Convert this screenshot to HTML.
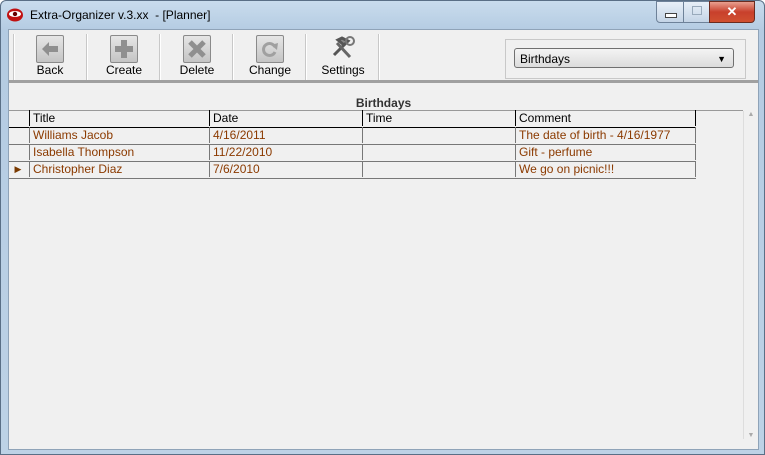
<html><head><style>
body{margin:0;width:765px;height:455px;overflow:hidden;font-family:"Liberation Sans",sans-serif;font-size:12px;background:#fff}
.win{position:absolute;left:0;top:0;width:763px;height:453px;border:1px solid #5a6f86;border-radius:6px 6px 0 0;background:linear-gradient(#c9dced,#b4cbe2 30px,#bdd2e6);}
.client{position:absolute;left:7px;top:28px;width:749px;height:419px;background:#f0f0f0;border:1px solid #8fa3b8}
.t{position:absolute;white-space:nowrap}
.btn{position:absolute;top:5px;width:26px;height:26px;border:1px solid #8a8a8a;background:linear-gradient(#e6e6e6,#c4c4c4);border-radius:2px}
.sep{position:absolute;top:4px;width:1px;height:46px;background:#c8c8c8;border-right:1px solid #fff}
.lbl{position:absolute;top:33px;font-size:12px;transform:translateX(-50%)}
.cell{position:absolute;border-right:1px solid #777;height:16px;line-height:16px;padding-left:3px;box-sizing:border-box}
.row{position:absolute;left:0;width:687px;height:17px;border-bottom:1px solid #777;color:#8b3a00}
</style></head><body>
<div class="win">
<svg style="position:absolute;left:6px;top:7px" width="16" height="14"><ellipse cx="8" cy="7" rx="8" ry="6.5" fill="#c01010"/><ellipse cx="8" cy="6" rx="6" ry="3" fill="#fff"/><circle cx="8" cy="6" r="2.2" fill="#600"/></svg>
<div class="t" style="left:29px;top:7px;font-size:12px">Extra-Organizer v.3.xx&nbsp; - [Planner]</div>
<div style="position:absolute;left:655px;top:0;width:26px;height:20px;border:1px solid #6e8299;border-radius:0 0 0 4px;background:linear-gradient(#e8f0f8,#c4d4e6)"><div style="position:absolute;left:8px;top:11px;width:10px;height:3px;background:#fff;border:1px solid #444"></div></div>
<div style="position:absolute;left:682px;top:0;width:25px;height:20px;border:1px solid #6e8299;background:linear-gradient(#e8f0f8,#c4d4e6)"><div style="position:absolute;left:8px;top:4px;width:8px;height:7px;border:1px solid #9ab"></div></div>
<div style="position:absolute;left:708px;top:0;width:44px;height:20px;border:1px solid #6b2c20;border-radius:0 0 4px 0;background:linear-gradient(#e8a090,#c8402c 50%,#d05030);color:#fff;font-weight:bold;text-align:center;font-size:13px;line-height:19px">✕</div>
<div class="client">
<div style="position:absolute;left:0;top:0;width:749px;height:50px;border-bottom:3px solid #a0a0a0">
<div class="sep" style="left:4px"></div><div class="sep" style="left:77px"></div><div class="sep" style="left:150px"></div><div class="sep" style="left:223px"></div><div class="sep" style="left:296px"></div><div class="sep" style="left:369px"></div>
<div class="btn" style="left:27px"><svg width="26" height="26"><path d="M5 13 L12 6 V10 H21 V16 H12 V20 Z" fill="#8f8f8f"/></svg></div>
<div class="btn" style="left:101px"><svg width="26" height="26"><path d="M10 4h6v6h6v6h-6v6h-6v-6h-6v-6h6z" fill="#8f8f8f"/></svg></div>
<div class="btn" style="left:174px"><svg width="26" height="26"><path d="M6 6 L20 20 M20 6 L6 20" stroke="#8f8f8f" stroke-width="5"/></svg></div>
<div class="btn" style="left:247px"><svg width="26" height="26"><path d="M18 11 A6 6 0 1 0 18 16" stroke="#a0a0a0" stroke-width="3" fill="none"/><path d="M14 9 L21 7 L20 14 Z" fill="#a0a0a0"/></svg></div>
<svg style="position:absolute;left:321px;top:5px" width="26" height="26"><path d="M4 20 L16 8 M8 5 L12 3 L18 6 L14 10 Z" stroke="#555" stroke-width="3" fill="#888"/><path d="M7 8 L20 22" stroke="#666" stroke-width="3"/><circle cx="20" cy="6" r="4" fill="none" stroke="#777" stroke-width="2"/></svg>
<div class="lbl" style="left:41px">Back</div><div class="lbl" style="left:115px">Create</div><div class="lbl" style="left:188px">Delete</div><div class="lbl" style="left:261px">Change</div><div class="lbl" style="left:334px">Settings</div>
<div style="position:absolute;left:496px;top:9px;width:239px;height:38px;border:1px solid #c8c8c8"></div>
<div style="position:absolute;left:505px;top:18px;width:220px;height:20px;border:1px solid #707070;border-radius:3px;background:linear-gradient(#f4f4f4,#dcdcdc);line-height:20px;padding-left:5px;box-sizing:border-box;color:#000">Birthdays<span style="position:absolute;right:7px;top:0;font-size:9px">▼</span></div>
</div>
<div class="t" style="left:0;width:749px;text-align:center;top:66px;font-weight:bold;color:#333">Birthdays</div>
<div style="position:absolute;left:0;top:80px;width:734px;border-top:1px solid #999"></div>
<div style="position:absolute;left:0;top:80px;width:687px;height:68px;">
<div class="row" style="top:0;color:#000;border-bottom:1px solid #000"><div class="cell" style="left:0;width:21px;border-color:#000"></div><div class="cell" style="left:21px;width:180px;border-color:#000">Title</div><div class="cell" style="left:201px;width:153px;border-color:#000">Date</div><div class="cell" style="left:354px;width:153px;border-color:#000">Time</div><div class="cell" style="left:507px;width:180px;border-color:#000">Comment</div></div>
<div class="row" style="top:17px"><div class="cell" style="left:0;width:21px"></div><div class="cell" style="left:21px;width:180px">Williams Jacob</div><div class="cell" style="left:201px;width:153px">4/16/2011</div><div class="cell" style="left:354px;width:153px"></div><div class="cell" style="left:507px;width:180px">The date of birth - 4/16/1977</div></div>
<div class="row" style="top:34px"><div class="cell" style="left:0;width:21px"></div><div class="cell" style="left:21px;width:180px">Isabella Thompson</div><div class="cell" style="left:201px;width:153px">11/22/2010</div><div class="cell" style="left:354px;width:153px"></div><div class="cell" style="left:507px;width:180px">Gift - perfume</div></div>
<div class="row" style="top:51px"><div class="cell" style="left:0;width:21px;font-size:9px;color:#7a3a00">&nbsp;▶</div><div class="cell" style="left:21px;width:180px">Christopher Diaz</div><div class="cell" style="left:201px;width:153px">7/6/2010</div><div class="cell" style="left:354px;width:153px"></div><div class="cell" style="left:507px;width:180px">We go on picnic!!!</div></div>
</div>
<div style="position:absolute;left:734px;top:81px;width:14px;height:328px;border-left:1px solid #ddd;background:#f0f0f0;color:#aaa;font-size:7px;text-align:center">▲<div style="position:absolute;bottom:0;width:14px">▼</div></div>
</div></div>
</body></html>
